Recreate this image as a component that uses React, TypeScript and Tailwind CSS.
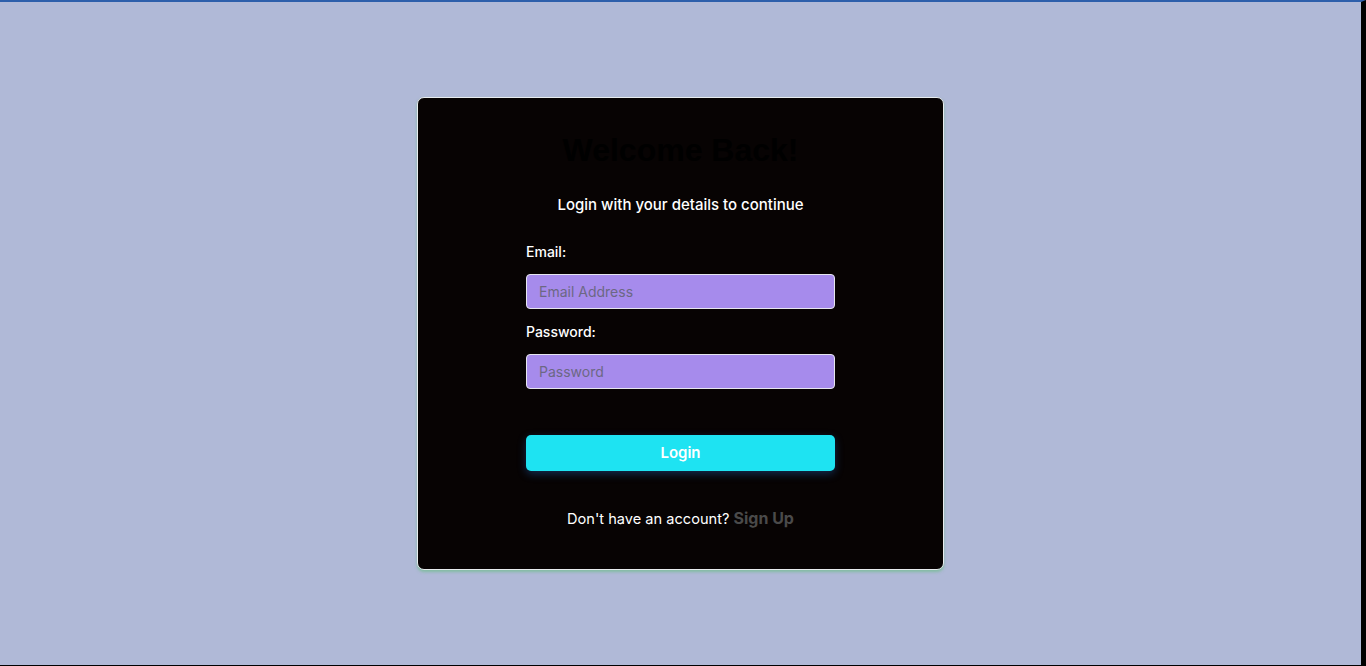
import React from "react";

// Login card on a pale periwinkle page.
export default function App() {
  return (
    <div className="h-[666px] w-full border-t-2 border-r-[5px] border-b border-t-[#2d5fab] border-r-black border-b-black bg-[#b0b9d7] flex items-center justify-center font-['Inter',sans-serif]">
      <form
        onSubmit={(e) => e.preventDefault()}
        className="w-[527px] h-[473px] rounded-[7px] border border-[#e8ecef] bg-[#070303] shadow-[0_2px_3px_rgba(110,190,140,0.7)] flex flex-col items-center pt-[33px]"
      >
        <h1 className="h-[38px] leading-[38px] text-[32px] font-bold text-black font-['Liberation_Sans',Arial,sans-serif]">
          Welcome Back!
        </h1>
        <p className="mt-[26px] h-[20px] leading-[20px] text-[15px] font-medium text-white">
          Login with your details to continue
        </p>

        <div className="w-[309px] mt-[27px] flex flex-col">
          <label htmlFor="email" className="h-[20px] leading-[20px] text-[14px] font-medium text-white">
            Email:
          </label>
          <input
            id="email"
            type="email"
            placeholder="Email Address"
            className="mt-[12px] h-[35px] w-full rounded-[4px] border border-[#e6e6ef] bg-[#a68bec] px-[12px] text-[14px] text-black placeholder:text-[#6c6884] outline-none"
          />
          <label htmlFor="password" className="mt-[13px] h-[20px] leading-[20px] text-[14px] font-medium text-white">
            Password:
          </label>
          <input
            id="password"
            type="password"
            placeholder="Password"
            className="mt-[12px] h-[35px] w-full rounded-[4px] border border-[#e6e6ef] bg-[#a68bec] px-[12px] text-[14px] text-black placeholder:text-[#6c6884] outline-none"
          />
          <button
            type="submit"
            className="mt-[46px] h-[36px] w-full rounded-[5px] bg-[#1ee3f2] text-[15px] font-semibold text-white shadow-[0_3px_8px_rgba(40,120,220,0.35)]"
          >
            Login
          </button>
        </div>

        <p className="mt-[35px] h-[24px] leading-[24px] text-[14.6px] text-white">
          Don't have an account?{" "}
          <a href="#" className="text-[16px] font-bold text-[#4a4a4a]">
            Sign Up
          </a>
        </p>
      </form>
    </div>
  );
}
